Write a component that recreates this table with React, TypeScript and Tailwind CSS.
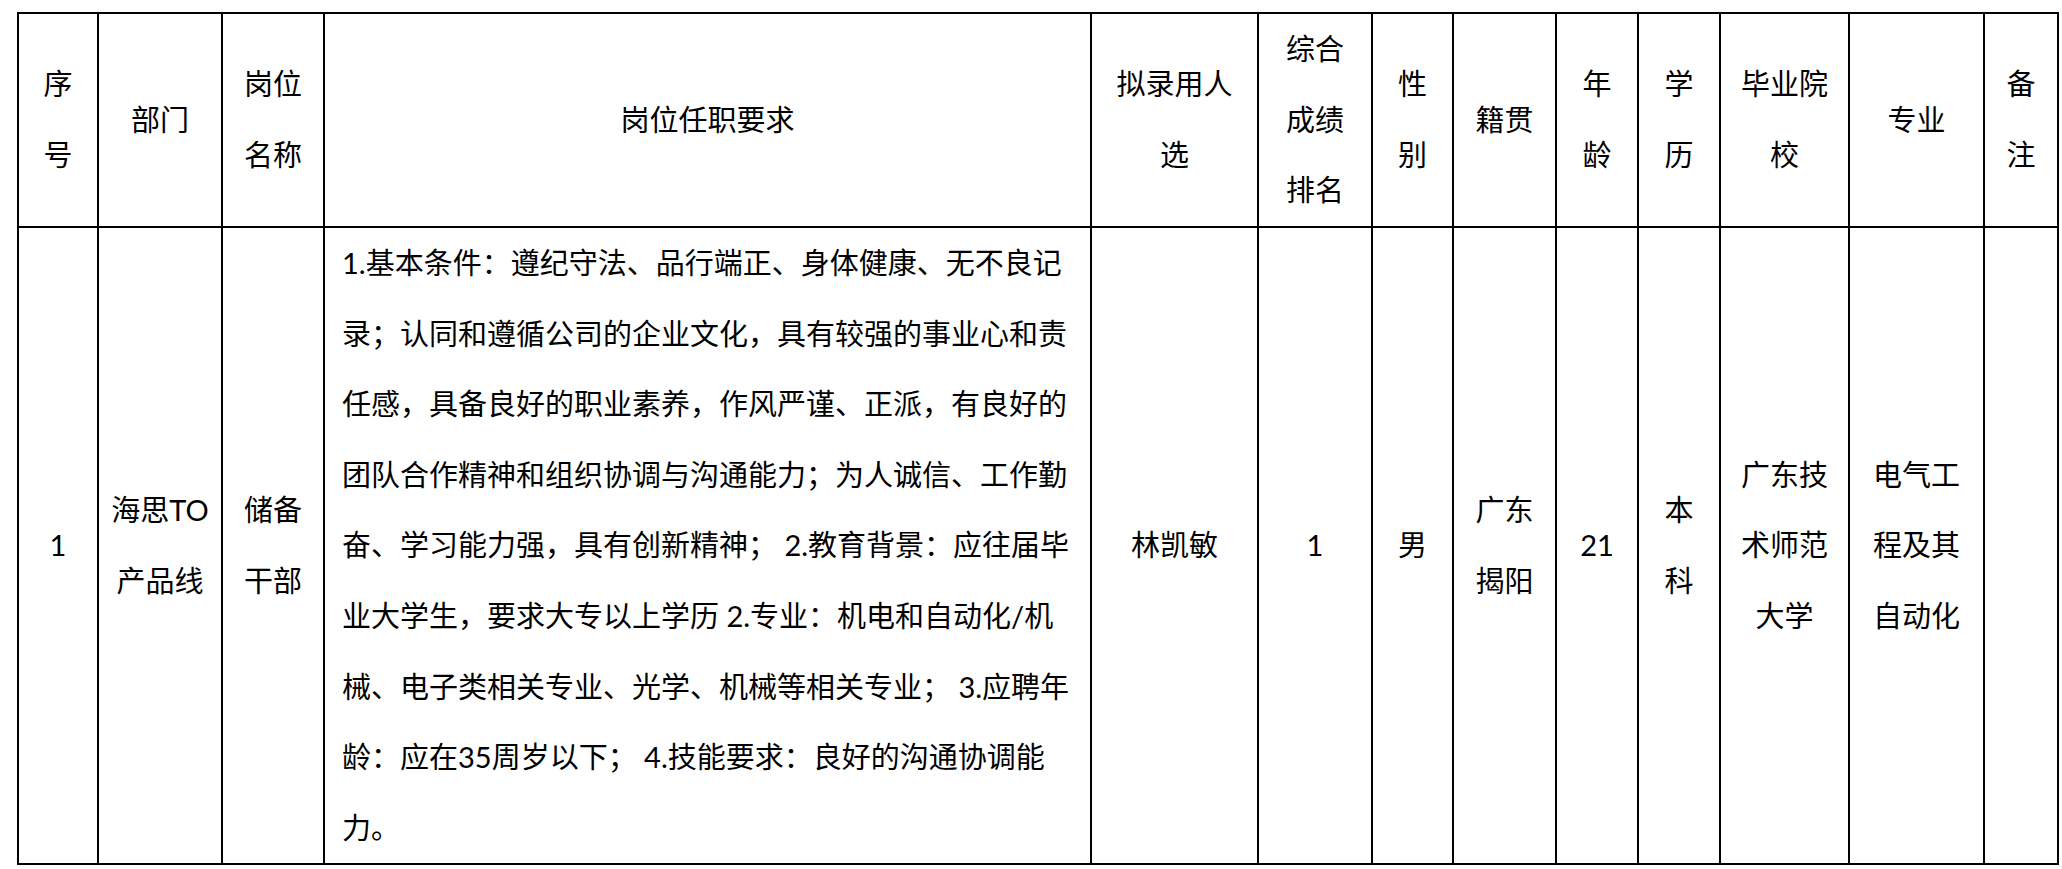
import React from 'react';

const widths = [80, 124, 102, 767, 167, 114, 81, 103, 82, 82, 129, 135, 74];

const header: string[][] = [
  ['序', '号'],
  ['部门'],
  ['岗位', '名称'],
  ['岗位任职要求'],
  ['拟录用人', '选'],
  ['综合', '成绩', '排名'],
  ['性', '别'],
  ['籍贯'],
  ['年', '龄'],
  ['学', '历'],
  ['毕业院', '校'],
  ['专业'],
  ['备', '注'],
];

const duty = [
  '1.基本条件：遵纪守法、品行端正、身体健康、无不良记',
  '录；认同和遵循公司的企业文化，具有较强的事业心和责',
  '任感，具备良好的职业素养，作风严谨、正派，有良好的',
  '团队合作精神和组织协调与沟通能力；为人诚信、工作勤',
  '奋、学习能力强，具有创新精神； 2.教育背景：应往届毕',
  '业大学生，要求大专以上学历 2.专业：机电和自动化/机',
  '械、电子类相关专业、光学、机械等相关专业； 3.应聘年',
  '龄：应在35周岁以下； 4.技能要求：良好的沟通协调能',
  '力。',
];

const row: (string[] | null)[] = [
  ['1'],
  ['海思TO', '产品线'],
  ['储备', '干部'],
  null,
  ['林凯敏'],
  ['1'],
  ['男'],
  ['广东', '揭阳'],
  ['21'],
  ['本', '科'],
  ['广东技', '术师范', '大学'],
  ['电气工', '程及其', '自动化'],
  [],
];

const Lines = ({ lines }: { lines: string[] }) => (
  <>
    {lines.map((l, i) => (
      <div key={i} className="whitespace-nowrap">{l}</div>
    ))}
  </>
);

export default function App() {
  return (
    <div className="min-h-screen bg-white pl-[17px] pt-[12px] text-black font-['Lato','Noto_Sans_CJK_SC',sans-serif]">
      <table className="table-fixed border-collapse border-2 border-black text-[29px] leading-[70.6px]">
        <colgroup>
          {widths.map((w, i) => (
            <col key={i} style={{ width: w }} />
          ))}
        </colgroup>
        <thead>
          <tr className="h-[214px]">
            {header.map((lines, i) => (
              <th key={i} className="border-2 border-black p-0 text-center align-middle font-normal">
                <Lines lines={lines} />
              </th>
            ))}
          </tr>
        </thead>
        <tbody>
          <tr className="h-[636px]">
            {row.map((lines, i) =>
              lines === null ? (
                <td key={i} className="border-2 border-black py-0 pl-[17px] pr-2 text-left align-middle">
                  {duty.map((l, j) => (
                    <div key={j} className="whitespace-pre">{l}</div>
                  ))}
                </td>
              ) : (
                <td key={i} className="border-2 border-black p-0 text-center align-middle">
                  <Lines lines={lines} />
                </td>
              )
            )}
          </tr>
        </tbody>
      </table>
    </div>
  );
}
